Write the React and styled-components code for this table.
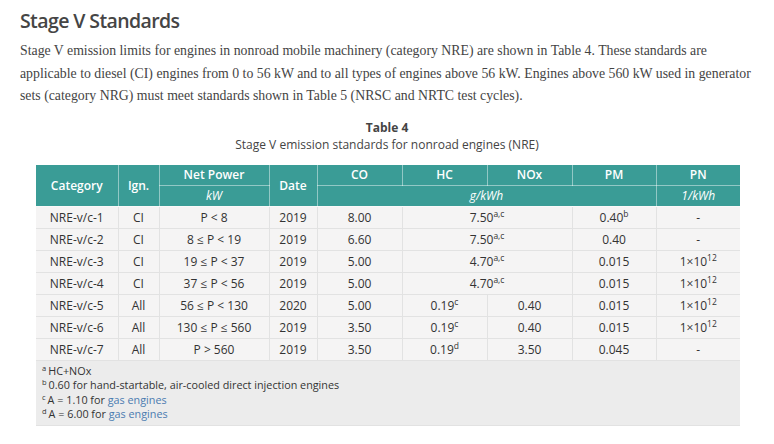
import React from 'react';
import styled, { createGlobalStyle } from 'styled-components';

const GlobalStyle = createGlobalStyle`
  html, body {
    margin: 0;
    padding: 0;
    background: #ffffff;
  }
`;

const rows = [
  { cat: 'NRE-v/c-1', ign: 'CI', power: 'P < 8', date: '2019', co: '8.00', hcnox: ['7.50', 'a,c'], pm: ['0.40', 'b'], pn: null },
  { cat: 'NRE-v/c-2', ign: 'CI', power: '8 ≤ P < 19', date: '2019', co: '6.60', hcnox: ['7.50', 'a,c'], pm: ['0.40'], pn: null },
  { cat: 'NRE-v/c-3', ign: 'CI', power: '19 ≤ P < 37', date: '2019', co: '5.00', hcnox: ['4.70', 'a,c'], pm: ['0.015'], pn: '12' },
  { cat: 'NRE-v/c-4', ign: 'CI', power: '37 ≤ P < 56', date: '2019', co: '5.00', hcnox: ['4.70', 'a,c'], pm: ['0.015'], pn: '12' },
  { cat: 'NRE-v/c-5', ign: 'All', power: '56 ≤ P < 130', date: '2020', co: '5.00', hc: ['0.19', 'c'], nox: '0.40', pm: ['0.015'], pn: '12' },
  { cat: 'NRE-v/c-6', ign: 'All', power: '130 ≤ P ≤ 560', date: '2019', co: '3.50', hc: ['0.19', 'c'], nox: '0.40', pm: ['0.015'], pn: '12' },
  { cat: 'NRE-v/c-7', ign: 'All', power: 'P > 560', date: '2019', co: '3.50', hc: ['0.19', 'd'], nox: '3.50', pm: ['0.045'], pn: null },
];

const Value = ({ v }) => (
  <>
    {v[0]}
    {v[1] && <Sup>{v[1]}</Sup>}
  </>
);

const App = () => {
  return (
    <Page>
      <GlobalStyle />
      <Heading>Stage V Standards</Heading>
      <Text>
        Stage V emission limits for engines in nonroad mobile machinery (category NRE) are shown in Table 4. These standards are
        applicable to diesel (CI) engines from 0 to 56 kW and to all types of engines above 56 kW. Engines above 560 kW used in generator
        sets (category NRG) must meet standards shown in Table 5 (NRSC and NRTC test cycles).
      </Text>

      <Caption>
        <CaptionTitle>Table 4</CaptionTitle>
        <CaptionText>Stage V emission standards for nonroad engines (NRE)</CaptionText>
      </Caption>

      <Table>
        <colgroup>
          <col style={{ width: 82 }} />
          <col style={{ width: 41 }} />
          <col style={{ width: 110 }} />
          <col style={{ width: 48 }} />
          <col style={{ width: 85 }} />
          <col style={{ width: 85 }} />
          <col style={{ width: 85 }} />
          <col style={{ width: 84 }} />
          <col style={{ width: 84 }} />
        </colgroup>
        <thead>
          <tr>
            <Th rowSpan={2}>Category</Th>
            <Th rowSpan={2}>Ign.</Th>
            <Th>Net Power</Th>
            <Th rowSpan={2}>Date</Th>
            <Th>CO</Th>
            <Th>HC</Th>
            <Th>NOx</Th>
            <Th>PM</Th>
            <Th>PN</Th>
          </tr>
          <tr>
            <Th $unit>kW</Th>
            <Th $unit colSpan={4}>g/kWh</Th>
            <Th $unit>1/kWh</Th>
          </tr>
        </thead>
        <tbody>
          {rows.map((r) => (
            <tr key={r.cat}>
              <Td>{r.cat}</Td>
              <Td>{r.ign}</Td>
              <Td>{r.power}</Td>
              <Td>{r.date}</Td>
              <Td>{r.co}</Td>
              {r.hcnox ? (
                <Td colSpan={2}><Value v={r.hcnox} /></Td>
              ) : (
                <>
                  <Td><Value v={r.hc} /></Td>
                  <Td>{r.nox}</Td>
                </>
              )}
              <Td><Value v={r.pm} /></Td>
              <Td>{r.pn ? <>1×10<Sup>{r.pn}</Sup></> : '-'}</Td>
            </tr>
          ))}
          <tr>
            <Notes colSpan={9}>
              <Note><NoteMark>a</NoteMark>HC+NOx</Note>
              <Note><NoteMark>b</NoteMark>0.60 for hand-startable, air-cooled direct injection engines</Note>
              <Note><NoteMark>c</NoteMark>A = 1.10 for <NoteLink href="#">gas engines</NoteLink></Note>
              <Note><NoteMark>d</NoteMark>A = 6.00 for <NoteLink href="#">gas engines</NoteLink></Note>
            </Notes>
          </tr>
        </tbody>
      </Table>
    </Page>
  );
};

const Page = styled.div`
  width: 740px;
  padding: 8px 14px 0 20px;
`;

const Heading = styled.h2`
  margin: 0;
  font-family: 'Open Sans', sans-serif;
  font-weight: 600;
  font-size: 19.5px;
  letter-spacing: -0.6px;
  line-height: 26px;
  color: #454545;
`;

const Text = styled.p`
  margin: 6px 0 0 0;
  font-family: 'Liberation Serif', serif;
  font-size: 13.8px;
  line-height: 22.5px;
  color: #444;
`;

const Caption = styled.div`
  margin-top: 12px;
  margin-right: 6px;
  text-align: center;
  font-family: 'Open Sans', sans-serif;
  color: #444;
`;

const CaptionTitle = styled.div`
  font-weight: 700;
  font-size: 12px;
  line-height: 16px;
`;

const CaptionText = styled.div`
  font-size: 12px;
  line-height: 17px;
`;

const Table = styled.table`
  margin: 12px 0 0 16px;
  width: 704px;
  table-layout: fixed;
  border-collapse: collapse;
  font-family: 'Open Sans', sans-serif;
  font-size: 12px;
  color: #333;
`;

const Th = styled.th`
  background: #3a9c96;
  color: #fff;
  font-style: ${(p) => (p.$unit ? 'italic' : 'normal')};
  font-weight: ${(p) => (p.$unit ? 400 : 600)};
  height: 20px;
  padding: 0 4px;
  text-align: center;
  border: 1px solid rgba(255, 255, 255, 0.45);
  border-top: none;
  &:first-child {
    border-left: none;
  }
  &:last-child {
    border-right: none;
  }
`;

const Td = styled.td`
  background: #f5f4f4;
  height: 21px;
  padding: 0 4px;
  text-align: center;
  border: 1px solid #e2e2e2;
  &:first-child {
    border-left: none;
  }
  &:last-child {
    border-right: none;
  }
`;

const Sup = styled.sup`
  font-size: 8.5px;
  line-height: 0;
  vertical-align: 5px;
`;

const Notes = styled.td`
  background: #ececec;
  padding: 3px 4px 3px 6px;
  height: 52px;
  vertical-align: top;
  text-align: left;
  border-bottom: 1px solid #e2e2e2;
  font-size: 10.8px;
  color: #333;
`;

const Note = styled.div`
  line-height: 14.5px;
`;

const NoteMark = styled.sup`
  font-size: 7.5px;
  line-height: 0;
  vertical-align: 4px;
  margin-right: 2px;
`;

const NoteLink = styled.a`
  color: #4a7bb0;
  text-decoration: none;
`;

export default App;
